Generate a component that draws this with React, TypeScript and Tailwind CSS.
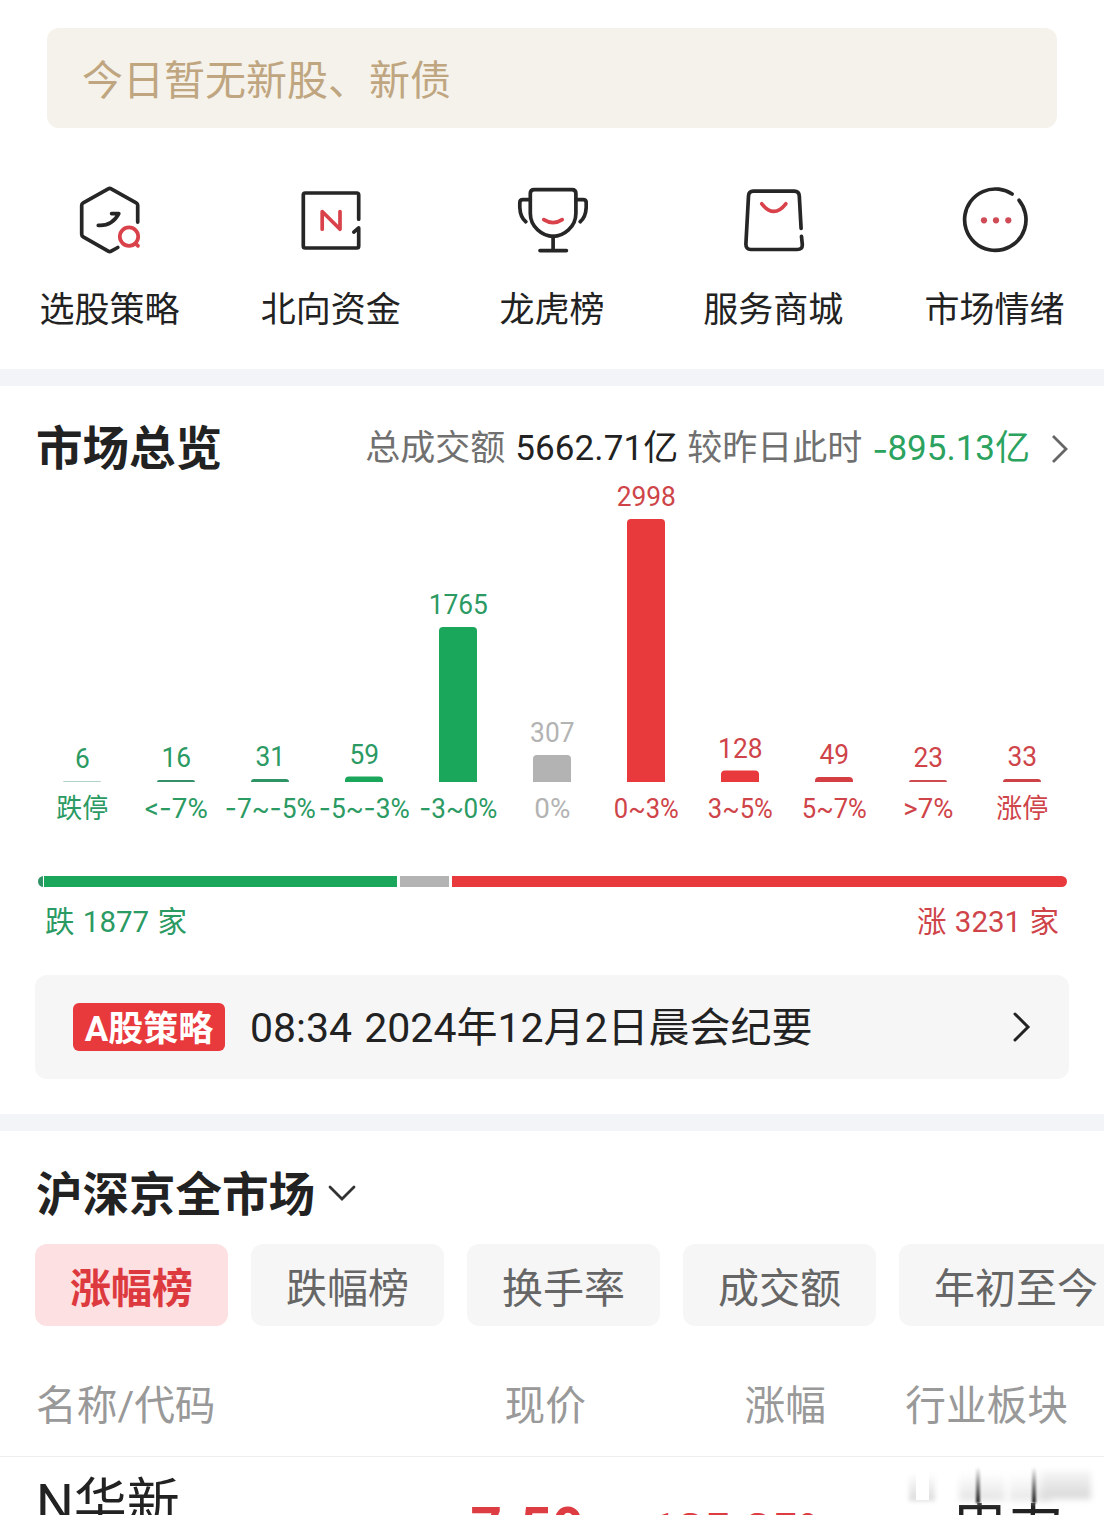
import React from 'react';

const RED = '#e8393d';
const GREEN = '#1aa75b';
const GRAY = '#b3b3b3';

// count label, axis label and axis label width for every bucket
const buckets = [
  { count: '6', label: '跌停', w: 52, h: 1, bar: '#b4d2c3', text: '#2b9a63' },
  { count: '16', label: '<-7%', w: 63, h: 2, bar: '#35906a', text: '#2b9a63' },
  { count: '31', label: '-7~-5%', w: 91, h: 3, bar: '#2f9465', text: '#2b9a63' },
  { count: '59', label: '-5~-3%', w: 91, h: 5.5, bar: GREEN, text: '#2b9a63' },
  { count: '1765', label: '-3~0%', w: 78, h: 155, bar: GREEN, text: '#2b9a63' },
  { count: '307', label: '0%', w: 36, h: 27, bar: GRAY, text: '#b3b3b3' },
  { count: '2998', label: '0~3%', w: 65, h: 263, bar: RED, text: '#cf4449' },
  { count: '128', label: '3~5%', w: 65, h: 11.5, bar: RED, text: '#cf4449' },
  { count: '49', label: '5~7%', w: 65, h: 5, bar: '#d53e43', text: '#cf4449' },
  { count: '23', label: '>7%', w: 50, h: 2, bar: '#cc4a50', text: '#cf4449' },
  { count: '33', label: '涨停', w: 52, h: 3, bar: '#cc4247', text: '#cf4449' },
];

const tabs = ['涨幅榜', '跌幅榜', '换手率', '成交额', '年初至今'];

function Icon({ viewBox, children }: { viewBox: string; children: React.ReactNode }) {
  return (
    <svg
      width="72"
      height="72"
      viewBox={viewBox}
      fill="none"
      stroke="#262626"
      strokeWidth="3.7"
      strokeLinecap="round"
      strokeLinejoin="round"
    >
      {children}
    </svg>
  );
}

const shortcuts = [
  {
    name: '选股策略',
    icon: (
      <Icon viewBox="74 183.7 72 72">
        <path d="M137.7 221.8V205Q137.7 203.3 136.2 202.5L111.2 188.6Q109.7 187.7 108.2 188.6L83.2 202.5Q81.7 203.3 81.7 205V234Q81.7 235.7 83.2 236.5L108.2 250.8Q109.7 251.7 111.2 250.8L117.8 247.2" />
        <path d="M98.3 225Q112 226 118.8 213.3H111.6" />
        <g stroke="#d9424a">
          <circle cx="129" cy="236.3" r="9.2" />
          <path d="M135.8 243.4L138 245.6" />
        </g>
      </Icon>
    ),
  },
  {
    name: '北向资金',
    icon: (
      <Icon viewBox="295 183.7 72 72">
        <path d="M358.7 218.9V194.7Q358.7 192.7 356.7 192.7H305.3Q303.3 192.7 303.3 194.7V245.7Q303.3 247.7 305.3 247.7H356.7Q358.7 247.7 358.7 245.7V227.6L353.8 231.8" />
        <path d="M322.2 228.9V211.2L340 228.9V211.2" stroke="#d9424a" />
      </Icon>
    ),
  },
  {
    name: '龙虎榜',
    icon: (
      <Icon viewBox="516 183.7 72 72">
        <path d="M530.3 193.3Q530.3 189.3 534.3 189.3H571.9Q575.9 189.3 575.9 193.3V213Q575.9 223 568.5 229.6Q561.5 236 553.1 236Q544.7 236 537.7 229.6Q530.3 223 530.3 213Z" />
        <path d="M530.3 199.3H523Q519.8 199.3 519.8 202.5V207Q520.3 217 525.8 221.4M575.9 199.3H583.1Q586.2 199.3 586.2 202.5V207Q585.7 217 580.2 221.4" />
        <path d="M553.1 236V250.3M540 250.3H566.4" />
        <path d="M543.8 219.3Q553.1 225.2 562.2 219.3" stroke="#d9424a" />
      </Icon>
    ),
  },
  {
    name: '服务商城',
    icon: (
      <Icon viewBox="737.2 183.5 72 72">
        <path d="M801.3 228L799.5 195.5Q799.2 190.7 794.5 190.7H753.5Q749 190.7 748.7 195.5L746.1 243.5Q746 249 751 249H797.5Q802.8 249 802.5 244L801.7 235.9" />
        <path d="M762 203.3Q774 218.5 786 203.3" stroke="#d9424a" />
      </Icon>
    ),
  },
  {
    name: '市场情绪',
    icon: (
      <Icon viewBox="957.7 183.7 72 72">
        <path d="M1011.8 193.7A30.7 30.7 0 1 0 1018.8 200" />
        <g fill="#cf4b55" stroke="none">
          <circle cx="983.7" cy="220" r="3.1" />
          <circle cx="995.7" cy="220" r="3.1" />
          <circle cx="1008" cy="220" r="3.1" />
        </g>
      </Icon>
    ),
  },
];

function Distribution() {
  return (
    <svg className="block w-full" height="350" viewBox="0 480 1104 350" fontSize="27.5">
      {buckets.map((b, i) => {
        const cx = 82 + i * 94;
        const top = 782 - b.h;
        const r = Math.min(4, b.h);
        return (
          <g key={b.label}>
            <path
              d={`M${cx - 19} 782V${top + r}q0 ${-r} ${r} ${-r}h${38 - 2 * r}q${r} 0 ${r} ${r}V782z`}
              fill={b.bar}
            />
            <text
              x={cx + 0.3}
              y={top - 13}
              fill={b.text}
              textAnchor="middle"
              textLength={b.count.length * 14.8}
              lengthAdjust="spacingAndGlyphs"
            >
              {b.count}
            </text>
            <text
              x={cx + 0.3}
              y="818.4"
              fill={b.text}
              textAnchor="middle"
              textLength={b.w}
              lengthAdjust="spacingAndGlyphs"
            >
              {b.label.split('').map((ch, n) => (
                <tspan key={n} className={ch === '-' ? 'font-[Inter]' : undefined}>
                  {ch}
                </tspan>
              ))}
            </text>
          </g>
        );
      })}
    </svg>
  );
}

export default function App() {
  return (
    <div className="w-[1104px] h-[1515px] overflow-hidden bg-white text-[#222] font-[Roboto,'Noto_Sans_CJK_SC',sans-serif] whitespace-nowrap">
      <div className="h-[369px] pt-7">
        <div className="mx-[47px] h-[100px] rounded-xl bg-[#f5f2eb] pl-[35px] pt-[7px] flex items-center text-[41px] text-[#bfa680]">
          今日暂无新股、新债
        </div>
        <div className="-mx-px mt-14 grid grid-cols-5">
          {shortcuts.map((s) => (
            <div key={s.name} className="flex flex-col items-center">
              {s.icon}
              <span className="mt-[29px] text-[35px] leading-[52px]">{s.name}</span>
            </div>
          ))}
        </div>
      </div>

      <div className="h-[17px] bg-[#f2f4f7]" />

      <div className="h-[728px]">
        <div className="h-[94px] pl-9 pr-[34px] pt-[28px] flex justify-between">
          <h2 className="text-[46.5px] leading-[70px] font-bold">市场总览</h2>
          <div className="flex items-center h-[70px] text-[35px] leading-[70px]">
            <span className="text-[#707070]">总成交额</span>
            <span className="ml-[10px] tracking-[0.1px]">5662.71亿</span>
            <span className="ml-[9px] text-[#707070]">较昨日此时</span>
            <span className="ml-[10px] flex text-[#2ba35f]">
              <span className="font-[Inter] tracking-[-1px]">-</span>
              895.13亿
            </span>
            <svg className="ml-[20px] -mt-1" width="20" height="32" viewBox="0 0 20 32" fill="none" stroke="#666" strokeWidth="2.8">
              <path d="M3 5L16 18L3 31" />
            </svg>
          </div>
        </div>

        <Distribution />

        <div className="ml-[38px] mr-[37px] mt-[46px] h-[11px] flex rounded-full overflow-hidden">
          <div className="w-[5px] bg-[#2f9465]" />
          <div className="ml-px w-[353px] bg-[#1aa75b]" />
          <div className="ml-[3px] w-[49px] bg-[#b3b3b3]" />
          <div className="ml-[3px] flex-1 bg-[#e8393d]" />
        </div>
        <div className="mt-[13px] pl-[45px] pr-[45px] flex justify-between text-[29.5px] leading-[44px] [word-spacing:1px]">
          <span className="text-[#2b9a63]">跌 1877 家</span>
          <span className="text-[#cf4449]">涨 3231 家</span>
        </div>

        <div className="mx-[35px] mt-[31px] h-[104px] rounded-xl bg-[#f6f6f6] pl-[38px] pr-[38px] flex items-center">
          <span className="w-[152px] h-12 pt-[6px] rounded-md bg-[#e8393d] text-white text-[35px] font-bold flex items-center justify-center">
            A股策略
          </span>
          <span className="ml-[25px] pt-[3px] text-[41px] [word-spacing:2px]">
            08:34 2024年12月2日晨会纪要
          </span>
          <svg className="ml-auto" width="20" height="32" viewBox="0 0 20 32" fill="none" stroke="#222" strokeWidth="3" strokeLinecap="round">
            <path d="M4 3L17 16L4 29" />
          </svg>
        </div>
      </div>

      <div className="h-[17px] bg-[#f2f4f7]" />

      <div className="h-[113px] pl-9 pt-[29px] flex">
        <h2 className="text-[46.5px] leading-[70px] font-bold">沪深京全市场</h2>
        <svg className="ml-[13px] mt-[23px]" width="28" height="24" viewBox="0 0 28 24" fill="none" stroke="#333" strokeWidth="2.8" strokeLinecap="round">
          <path d="M2 4L14 16L26 4" />
        </svg>
      </div>

      <div className="pl-[35px] flex gap-[23px]">
        {tabs.map((tab, i) => (
          <button
            key={tab}
            className={`shrink-0 h-[82px] px-[35px] pt-[9px] rounded-xl text-[41px] ${
              i === 0 ? 'bg-[#fde0e1] text-[#dd3a3f] font-bold' : 'bg-[#f6f6f6] text-[#666]'
            }`}
          >
            {tab}
          </button>
        ))}
      </div>

      <div className="h-[131px] pt-[31px] px-9 border-b border-[#eee] flex items-center text-[40.7px] text-[#999]">
        <span className="w-[300px]">名称/代码</span>
        <span className="w-[250px] text-right">现价</span>
        <span className="w-[240px] text-right">涨幅</span>
        <span className="flex-1 text-right">行业板块</span>
      </div>

      <div className="relative pl-9 pr-[40px] flex items-start leading-[76px]">
        <span className="w-[300px] pt-[9px] text-[53px]">N华新</span>
        <span className="w-[249px] pt-[33px] text-right font-bold text-[#dc3c42] text-[55px] tracking-[1px]">7.59</span>
        <span className="w-[248px] pt-[35px] text-right font-bold text-[#dc3c42] text-[47px]">125.25%</span>
        <span className="flex-1 pt-[30px] text-right text-[56px]">电力</span>
        {/* fading watermark over the last column */}
        <div className="absolute left-[905px] top-[10px] w-[192px] h-[36px] bg-white">
          <div className="absolute left-[4px] top-[6px] w-[26px] h-[28px] blur-[2px] bg-linear-to-b from-white to-[#dcdcdc]" />
          <div className="absolute left-[11px] top-[2px] w-[13px] h-[31px] bg-white" />
          <div className="absolute left-[54px] top-[6px] w-[46px] h-[28px] blur-[3px] bg-linear-to-b from-white to-[#e4e4e4]" />
          <div className="absolute left-[104px] top-[6px] w-[42px] h-[28px] blur-[3px] bg-linear-to-b from-white to-[#e8e8e8]" />
          <div className="absolute left-[136px] top-[4px] w-[50px] h-[28px] blur-[3px] bg-linear-to-b from-[#f6f6f6] to-[#d8d8d8]" />
          <div className="absolute left-[71px] top-0 w-[4px] h-[36px] blur-[1px] bg-linear-to-b from-white to-[#222]" />
          <div className="absolute left-[127px] top-0 w-[4px] h-[36px] blur-[1px] bg-linear-to-b from-white to-[#222]" />
        </div>
      </div>
    </div>
  );
}
